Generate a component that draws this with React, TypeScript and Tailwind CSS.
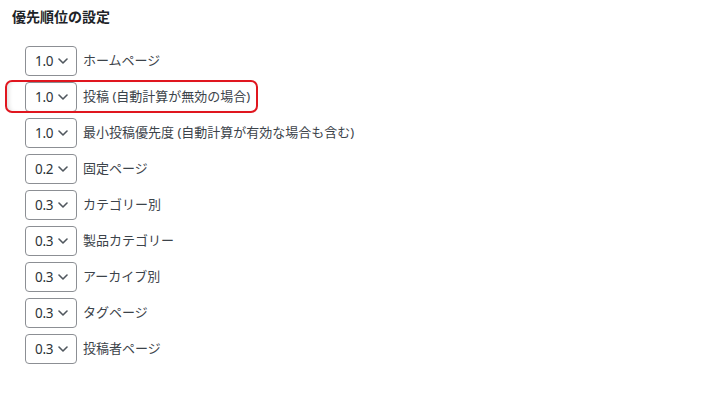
const rows = [
  { value: '1.0', label: 'ホームページ' },
  { value: '1.0', label: '投稿 (自動計算が無効の場合)', highlight: true },
  { value: '1.0', label: '最小投稿優先度 (自動計算が有効な場合も含む)' },
  { value: '0.2', label: '固定ページ' },
  { value: '0.3', label: 'カテゴリー別' },
  { value: '0.3', label: '製品カテゴリー' },
  { value: '0.3', label: 'アーカイブ別' },
  { value: '0.3', label: 'タグページ' },
  { value: '0.3', label: '投稿者ページ' },
];

const Chevron = () => (
  <svg width="10" height="6" viewBox="0 0 10 6" fill="none">
    <path d="M1 1l4 4 4-4" stroke="#50575e" strokeWidth="1.6" strokeLinecap="round" strokeLinejoin="round" />
  </svg>
);

const App = () => {
  return (
    <div
      className="min-h-screen bg-white pl-3 pt-[8px]"
      style={{ fontFamily: '"Segoe UI", "Noto Sans", "Noto Sans CJK JP", sans-serif' }}
    >
      {/* Section title */}
      <h2 className="text-[14px] font-bold leading-[18px] text-[#1d2327]">優先順位の設定</h2>

      {/* Priority rows */}
      <div className="mt-[20px] ml-[13px] flex flex-col gap-[6px]">
        {rows.map((row, i) => (
          <div key={i} className="relative flex items-center gap-[6px]">
            {row.highlight && (
              <div className="pointer-events-none absolute -left-[20px] -top-[2px] -bottom-[1px] w-[253px] rounded-[7px] border-2 border-[#e0161f] shadow-[inset_4px_0_4px_-2px_rgba(0,0,0,0.12)]" />
            )}
            <div className="flex h-[30px] w-[52px] items-center justify-between rounded-[4px] border border-[#8c8f94] bg-white pl-[9px] pr-[8px] text-[13.5px] tracking-[-0.3px] text-[#2c3338]">
              <span>{row.value}</span>
              <Chevron />
            </div>
            <span className="text-[13px] text-[#3c434a]">{row.label}</span>
          </div>
        ))}
      </div>
    </div>
  );
};

export default App;
